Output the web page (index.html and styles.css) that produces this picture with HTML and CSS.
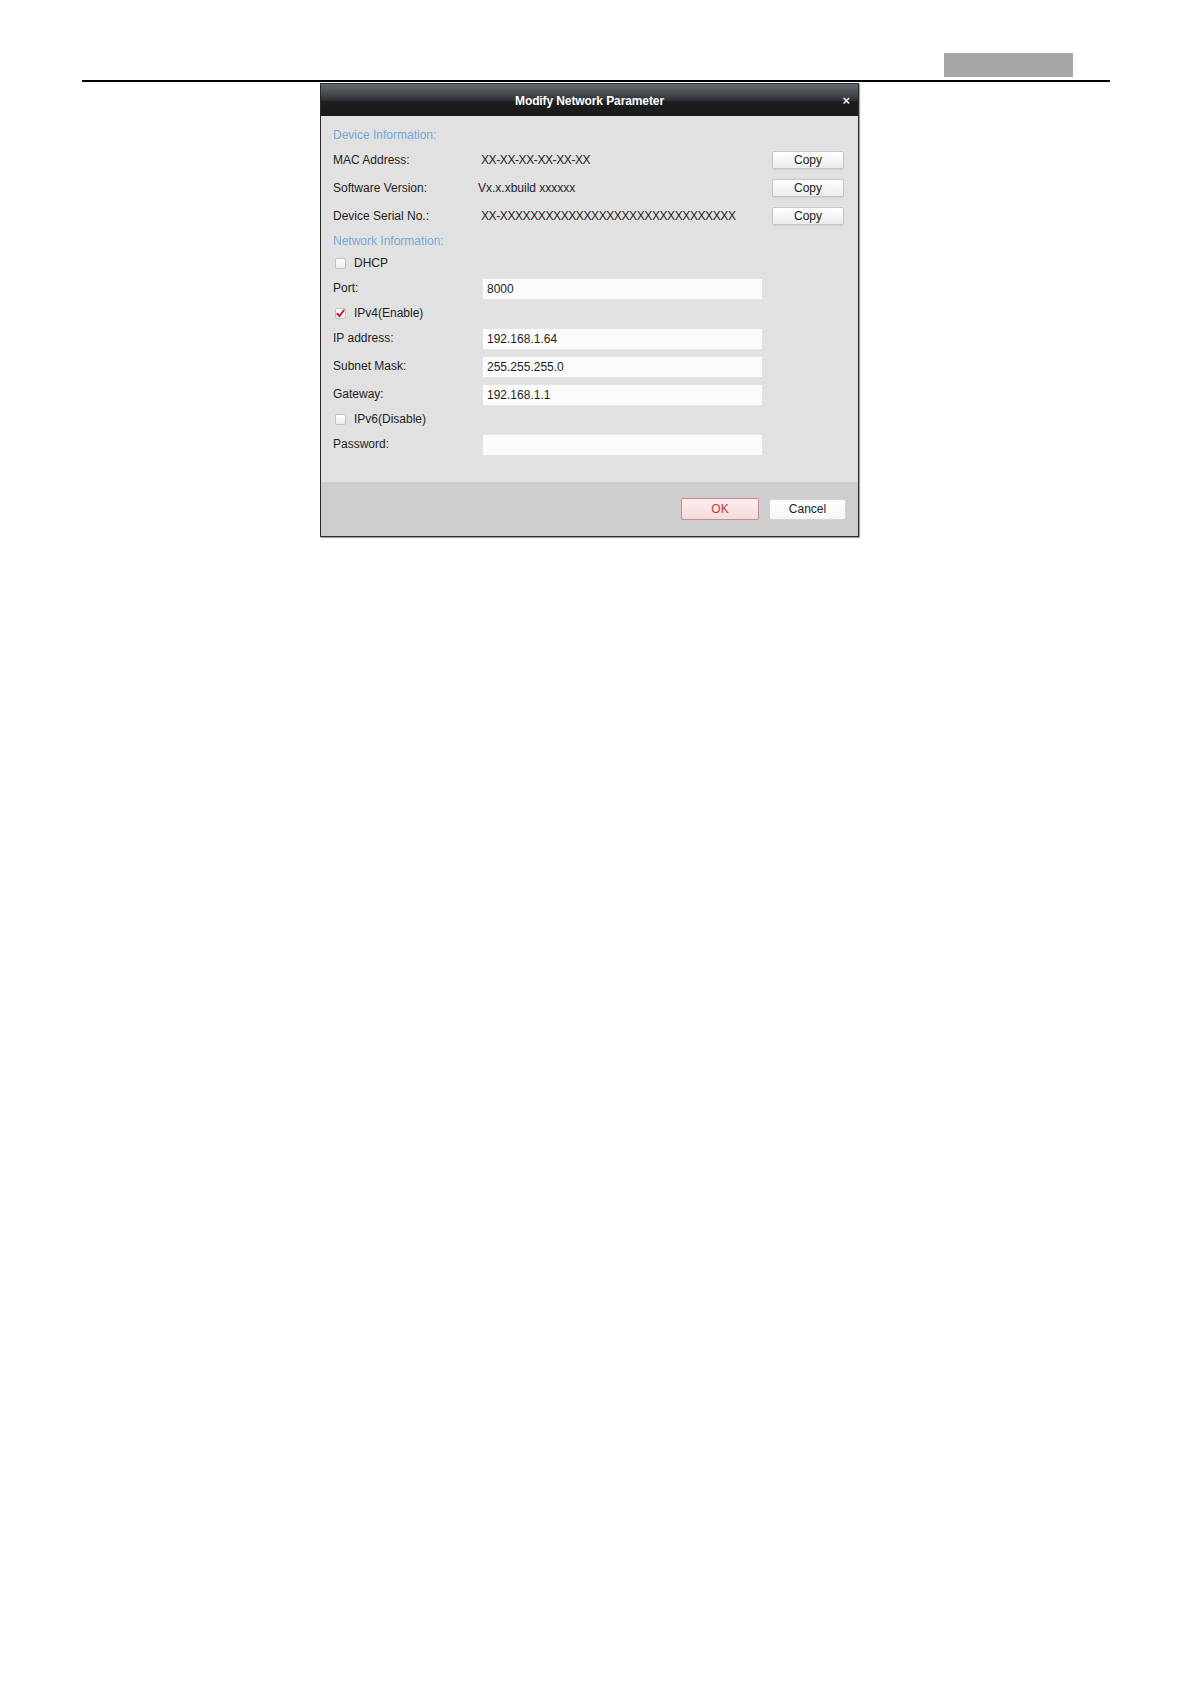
FILE: index.html
```html
<!DOCTYPE html>
<html lang="en">
<head>
<meta charset="utf-8">
<title>Modify Network Parameter</title>
<link rel="stylesheet" href="styles.css">
</head>
<body>
<div class="sheet">
  <div class="header">
    <div class="tab"></div>
  </div>
  <div class="dialog">
    <div class="titlebar">
      <span></span>
      <span class="title">Modify Network Parameter</span>
      <span class="close">×</span>
    </div>
    <div class="body">
      <div class="row short section">Device Information:</div>
      <div class="row tall">
        <span class="label">MAC Address:</span>
        <span class="value tight">XX-XX-XX-XX-XX-XX</span>
        <button class="btn copy">Copy</button>
      </div>
      <div class="row tall">
        <span class="label">Software Version:</span>
        <span class="value sw">Vx.x.xbuild xxxxxx</span>
        <button class="btn copy">Copy</button>
      </div>
      <div class="row tall">
        <span class="label">Device Serial No.:</span>
        <span class="value tight">XX-XXXXXXXXXXXXXXXXXXXXXXXXXXXXXXX</span>
        <button class="btn copy">Copy</button>
      </div>
      <div class="row short section">Network Information:</div>
      <div class="row short check">
        <span class="box"></span>
        <span>DHCP</span>
      </div>
      <div class="row tall">
        <span class="label">Port:</span>
        <span class="input">8000</span>
      </div>
      <div class="row short check">
        <span class="box">
          <svg width="11" height="11" viewBox="0 0 11 11"><path d="M2.2 5.6 L4.4 8.2 L8.9 2.2" fill="none" stroke="#c8102e" stroke-width="1.8" stroke-linecap="round" stroke-linejoin="round"/></svg>
        </span>
        <span>IPv4(Enable)</span>
      </div>
      <div class="row tall">
        <span class="label">IP address:</span>
        <span class="input">192.168.1.64</span>
      </div>
      <div class="row tall">
        <span class="label">Subnet Mask:</span>
        <span class="input">255.255.255.0</span>
      </div>
      <div class="row tall">
        <span class="label">Gateway:</span>
        <span class="input">192.168.1.1</span>
      </div>
      <div class="row short check">
        <span class="box"></span>
        <span>IPv6(Disable)</span>
      </div>
      <div class="row tall">
        <span class="label">Password:</span>
        <span class="input"></span>
      </div>
    </div>
    <div class="footer">
      <button class="btn ok">OK</button>
      <button class="btn cancel">Cancel</button>
    </div>
  </div>
</div>
</body>
</html>
```
FILE: styles.css
```css
html, body {
  margin: 0;
  padding: 0;
  background: #ffffff;
}

body {
  font-family: "Liberation Sans", Arial, sans-serif;
  font-size: 12px;
  color: #1e1e1e;
  min-height: 1684px;
}

.sheet {
  margin-left: 82px;
  width: 1028px;
  padding-top: 53px;
}

.header {
  display: flex;
  justify-content: flex-end;
  padding-bottom: 3px;
  border-bottom: 2px solid #000000;
}

.tab {
  width: 129px;
  height: 24px;
  margin-right: 37px;
  background: #a6a6a6;
}

.dialog {
  margin-left: 238px;
  margin-top: 1px;
  width: 539px;
  box-sizing: border-box;
  border: 1px solid #2a2a2a;
  box-shadow: 1px 1px 1px rgba(0, 0, 0, 0.35);
  background: #e1e1e1;
}

.titlebar {
  height: 32px;
  display: grid;
  grid-template-columns: 1fr auto 1fr;
  align-items: center;
  background: linear-gradient(#62666e 0%, #464a51 30%, #2e3035 52%, #1e1e1e 53%, #1a1a1a 100%);
  color: #ffffff;
}

.title {
  font-weight: bold;
  font-size: 12px;
  letter-spacing: -0.1px;
  padding-top: 1px;
}

.close {
  justify-self: end;
  margin-right: 8px;
  font-weight: bold;
  font-size: 13px;
  color: #e8e8e8;
  line-height: 1;
}

.body {
  padding: 8px 14px 24px 12px;
}

.row {
  display: flex;
  align-items: center;
}

.row.short {
  height: 22px;
}

.row.tall {
  height: 28px;
}

.section {
  color: #74aad8;
}

.label {
  width: 148px;
  flex: none;
}

.value {
  flex: 1;
}

.value.tight {
  letter-spacing: -0.4px;
}

.value.sw {
  margin-left: -3px;
}

.btn {
  font-family: "Liberation Sans", Arial, sans-serif;
  font-size: 12px;
  color: #222222;
  border: 1px solid #c6c6c6;
  border-radius: 2px;
  background: linear-gradient(#ffffff, #f4f4f4 60%, #ececec);
  padding: 0;
  box-sizing: border-box;
  cursor: pointer;
}

.copy {
  width: 72px;
  height: 18px;
  box-shadow: 0 1px 1px rgba(0, 0, 0, 0.08);
}

.check {
  padding-left: 2px;
  gap: 8px;
}

.box {
  width: 11px;
  height: 11px;
  box-sizing: border-box;
  border: 1px solid #c2c2c2;
  border-radius: 2px;
  background: linear-gradient(#ffffff, #ececec);
  display: flex;
}

.box svg {
  margin: -1px;
}

.input {
  width: 281px;
  height: 22px;
  box-sizing: border-box;
  margin-left: 1px;
  margin-top: 2px;
  padding-left: 4px;
  background: #fbfbfb;
  border: 1px solid #e4e4e4;
  display: flex;
  align-items: center;
}

.footer {
  height: 54px;
  background: #cdcdcd;
  display: flex;
  justify-content: flex-end;
  align-items: center;
  gap: 10px;
  padding-right: 12px;
}

.ok {
  width: 78px;
  height: 22px;
  color: #c0392b;
  border: 1px solid #cf8790;
  background: linear-gradient(#fbeef0, #f3dadd);
}

.cancel {
  width: 77px;
  height: 21px;
  border: 1px solid #d4d4d4;
  background: linear-gradient(#ffffff, #f6f6f6);
}
```
